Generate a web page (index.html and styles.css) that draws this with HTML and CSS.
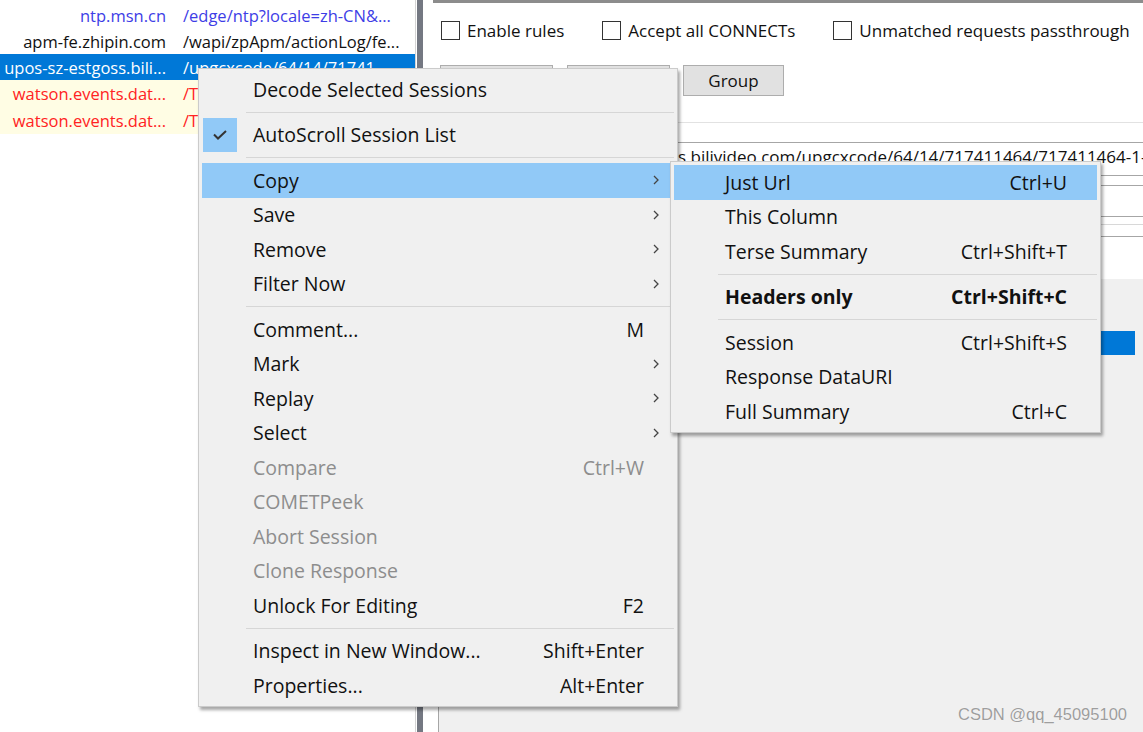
FILE: index.html
```html
<!DOCTYPE html>
<html lang="en">
<head>
    <meta charset="UTF-8">
    <meta name="viewport" content="width=device-width, initial-scale=1.0">
    <title>Fiddler - Session Context Menu</title>
    <link rel="stylesheet" href="styles.css">
</head>
<body>

    <div class="app">
        <!-- Session list -->
        <div class="sessions">
            <div class="session-row link">
                <span class="host">ntp.msn.cn</span>
                <span class="url">/edge/ntp?locale=zh-CN&amp;...</span>
            </div>
            <div class="session-row">
                <span class="host">apm-fe.zhipin.com</span>
                <span class="url">/wapi/zpApm/actionLog/fe...</span>
            </div>
            <div class="session-row selected">
                <span class="host">upos-sz-estgoss.bili...</span>
                <span class="url">/upgcxcode/64/14/71741...</span>
            </div>
            <div class="session-row error">
                <span class="host">watson.events.dat...</span>
                <span class="url">/Telemetry.Request</span>
            </div>
            <div class="session-row error">
                <span class="host">watson.events.dat...</span>
                <span class="url">/Telemetry.Request</span>
            </div>
        </div>

        <div class="splitter"></div>

        <!-- AutoResponder tab -->
        <div class="workspace">
            <div class="tab-page">
                <div class="rule-options">
                    <label class="option"><span class="box"></span>Enable rules</label>
                    <label class="option"><span class="box"></span>Accept all CONNECTs</label>
                    <label class="option"><span class="box"></span>Unmatched requests passthrough</label>
                </div>
                <div class="rule-buttons">
                    <button class="btn btn-add">Add Rule</button>
                    <button class="btn btn-import">Import...</button>
                    <button class="btn btn-group">Group</button>
                </div>
                <div class="rule-list">
                    <div class="list-head"></div>
                    <div class="list-row"></div>
                    <div class="list-row rule-text">EXACT:https://upos-sz-estgoss.bilivideo.com/upgcxcode/64/14/717411464/717411464-1-30080.m4s</div>
                </div>
                <div class="rule-editor">
                    <div class="field field-a"></div>
                    <div class="field field-b"></div>
                    <div class="field field-c"></div>
                    <div class="field field-d"></div>
                    <div class="field field-e"></div>
                </div>
                <div class="editor-area">
                    <div class="save-bar"></div>
                </div>
            </div>
        </div>
    </div>

    <!-- Context menu -->
    <div class="context-menu main-menu">
        <div class="menu-item"><span class="mark"></span><span class="label">Decode Selected Sessions</span></div>
        <div class="menu-sep"></div>
        <div class="menu-item checked">
            <span class="mark"><svg width="14" height="10" viewBox="0 0 14 10"><polyline points="1,4.5 5,8.5 13,1" fill="none" stroke="#333" stroke-width="2"/></svg></span>
            <span class="label">AutoScroll Session List</span>
        </div>
        <div class="menu-sep"></div>
        <div class="menu-item active"><span class="mark"></span><span class="label">Copy</span><span class="arrow"><svg width="6" height="10" viewBox="0 0 6 10"><polyline points="1,1 5,5 1,9" fill="none" stroke="#444" stroke-width="1.3"/></svg></span></div>
        <div class="menu-item"><span class="mark"></span><span class="label">Save</span><span class="arrow"><svg width="6" height="10" viewBox="0 0 6 10"><polyline points="1,1 5,5 1,9" fill="none" stroke="#444" stroke-width="1.3"/></svg></span></div>
        <div class="menu-item"><span class="mark"></span><span class="label">Remove</span><span class="arrow"><svg width="6" height="10" viewBox="0 0 6 10"><polyline points="1,1 5,5 1,9" fill="none" stroke="#444" stroke-width="1.3"/></svg></span></div>
        <div class="menu-item"><span class="mark"></span><span class="label">Filter Now</span><span class="arrow"><svg width="6" height="10" viewBox="0 0 6 10"><polyline points="1,1 5,5 1,9" fill="none" stroke="#444" stroke-width="1.3"/></svg></span></div>
        <div class="menu-sep"></div>
        <div class="menu-item"><span class="mark"></span><span class="label">Comment...</span><span class="key">M</span></div>
        <div class="menu-item"><span class="mark"></span><span class="label">Mark</span><span class="arrow"><svg width="6" height="10" viewBox="0 0 6 10"><polyline points="1,1 5,5 1,9" fill="none" stroke="#444" stroke-width="1.3"/></svg></span></div>
        <div class="menu-item"><span class="mark"></span><span class="label">Replay</span><span class="arrow"><svg width="6" height="10" viewBox="0 0 6 10"><polyline points="1,1 5,5 1,9" fill="none" stroke="#444" stroke-width="1.3"/></svg></span></div>
        <div class="menu-item"><span class="mark"></span><span class="label">Select</span><span class="arrow"><svg width="6" height="10" viewBox="0 0 6 10"><polyline points="1,1 5,5 1,9" fill="none" stroke="#444" stroke-width="1.3"/></svg></span></div>
        <div class="menu-item disabled"><span class="mark"></span><span class="label">Compare</span><span class="key">Ctrl+W</span></div>
        <div class="menu-item disabled"><span class="mark"></span><span class="label">COMETPeek</span></div>
        <div class="menu-item disabled"><span class="mark"></span><span class="label">Abort Session</span></div>
        <div class="menu-item disabled"><span class="mark"></span><span class="label">Clone Response</span></div>
        <div class="menu-item"><span class="mark"></span><span class="label">Unlock For Editing</span><span class="key">F2</span></div>
        <div class="menu-sep"></div>
        <div class="menu-item"><span class="mark"></span><span class="label">Inspect in New Window...</span><span class="key">Shift+Enter</span></div>
        <div class="menu-item"><span class="mark"></span><span class="label">Properties...</span><span class="key">Alt+Enter</span></div>
    </div>

    <!-- Copy submenu -->
    <div class="context-menu sub-menu">
        <div class="menu-item active"><span class="mark"></span><span class="label">Just Url</span><span class="key">Ctrl+U</span></div>
        <div class="menu-item"><span class="mark"></span><span class="label">This Column</span></div>
        <div class="menu-item"><span class="mark"></span><span class="label">Terse Summary</span><span class="key">Ctrl+Shift+T</span></div>
        <div class="menu-sep"></div>
        <div class="menu-item bold"><span class="mark"></span><span class="label">Headers only</span><span class="key">Ctrl+Shift+C</span></div>
        <div class="menu-sep"></div>
        <div class="menu-item"><span class="mark"></span><span class="label">Session</span><span class="key">Ctrl+Shift+S</span></div>
        <div class="menu-item"><span class="mark"></span><span class="label">Response DataURI</span></div>
        <div class="menu-item"><span class="mark"></span><span class="label">Full Summary</span><span class="key">Ctrl+C</span></div>
    </div>

    <div class="watermark">CSDN @qq_45095100</div>

</body>
</html>
```

FILE: styles.css
```css
/* Basis */
body {
    margin: 0;
    width: 1143px;
    height: 732px;
    overflow: hidden;
    position: relative;
    background: #fff;
    font-family: "Open Sans", "Noto Sans", sans-serif;
}

.app {
    display: flex;
    height: 732px;
}

/* Session list */
.sessions {
    flex: none;
    width: 415px;
    padding-top: 2px;
    font-size: 16.5px;
    background: #fff;
}

.session-row {
    display: flex;
    align-items: center;
    height: 26px;
    white-space: nowrap;
    overflow: hidden;
    color: #111;
}

.session-row .host {
    flex: none;
    width: 166px;
    text-align: right;
}

.session-row .url {
    margin-left: 17px;
}

.session-row.link {
    color: #3d3de6;
}

.session-row.selected {
    background: #0078d7;
    color: #fff;
}

.session-row.error {
    height: 27px;
    background: #fffde4;
    color: #ff2323;
}

.splitter {
    flex: none;
    width: 1px;
    border-left: 1px solid #d4d4d4;
    border-right: 6px solid #747882;
}

/* AutoResponder */
.workspace {
    flex: 1;
    min-width: 0;
    display: flex;
    flex-direction: column;
    padding-left: 10px;
    background: #fff;
}

.tab-page {
    flex: 1;
    min-width: 0;
    display: flex;
    flex-direction: column;
    border-top: 3px solid #8c8c8c;
    overflow: hidden;
}

.rule-options {
    display: flex;
    align-items: center;
    gap: 38px;
    height: 54px;
    padding-left: 8px;
    font-size: 17px;
    color: #111;
}

.option {
    display: flex;
    align-items: center;
}

.box {
    width: 17px;
    height: 17px;
    margin-right: 7px;
    border: 1px solid #333;
    background: #fff;
}

.rule-buttons {
    display: flex;
    margin-top: 8px;
    padding-left: 7px;
}

.btn {
    height: 31px;
    margin: 0 14px 0 0;
    padding: 0;
    border: 1px solid #adadad;
    background: #e1e1e1;
    font-family: "Open Sans", sans-serif;
    font-size: 17px;
    color: #111;
}

.btn-add { width: 113px; }
.btn-import { width: 103px; margin-right: 13px; }
.btn-group { width: 101px; }

.rule-list {
    min-width: 0;
}

.list-head {
    height: 26px;
    border-bottom: 1px solid #e2e2e2;
}

.list-row {
    height: 19px;
    border-bottom: 1px solid #a6a6a6;
}

.list-row.rule-text {
    height: 20px;
    border-bottom: none;
    padding-left: 15px;
    font-size: 17px;
    line-height: 28px;
    white-space: nowrap;
    overflow: hidden;
    color: #111;
}

.field { border-bottom: 1px solid #a6a6a6; }
.field-a { height: 12px; }
.field-b { height: 9px; }
.field-c { height: 30px; }
.field-d { height: 7px; border-bottom-color: #d8d8d8; }
.field-e { height: 11px; }

.editor-area {
    flex: 1;
    margin-top: 42px;
    margin-left: 5px;
    border-left: 1px solid #a6a6a6;
    background: #f0f0f0;
}

.save-bar {
    height: 24px;
    margin: 52px 8px 0 0;
    background: #0078d7;
}

/* Context menu */
.context-menu {
    position: absolute;
    padding: 3px;
    border: 1px solid #cbcbcb;
    background: #f0f0f0;
    box-shadow: 2px 3px 3px rgba(0, 0, 0, 0.35);
}

.main-menu {
    left: 198px;
    top: 68px;
    width: 472px;
    z-index: 10;
}

.sub-menu {
    left: 670px;
    top: 161px;
    width: 423px;
    z-index: 11;
}

.menu-item {
    display: flex;
    align-items: center;
    height: 34.5px;
    font-size: 19.5px;
    color: #111;
    white-space: nowrap;
}

.menu-item .mark {
    flex: none;
    display: flex;
    align-items: center;
    justify-content: center;
    width: 34px;
    height: 100%;
    margin: 0 16px 0 1px;
}

.menu-item .label {
    flex: 1;
}

.menu-item .key {
    margin-right: 30px;
}

.menu-item .arrow {
    display: flex;
    margin-right: 15px;
}

.menu-item.active {
    background: #91c9f7;
}

.menu-item.checked .mark {
    background: #91c9f7;
}

.menu-item.disabled {
    color: #8d8d8d;
}

.menu-item.bold {
    font-weight: 700;
}

.menu-sep {
    height: 5px;
    margin: 0 0 5px 44px;
    border-bottom: 1px solid #d6d6d6;
}

/* Wasserzeichen */
.watermark {
    position: absolute;
    right: 16px;
    bottom: 8px;
    font-family: "Liberation Sans", Arial, sans-serif;
    font-size: 16.5px;
    color: #9e9e9e;
    text-shadow: 0 0 1px #fff;
}
```
